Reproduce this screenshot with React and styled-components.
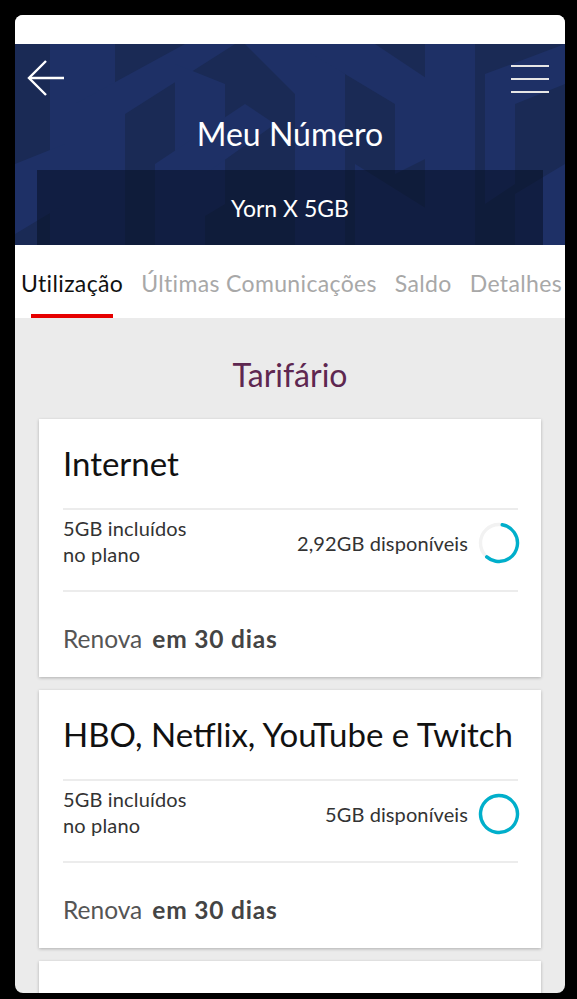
import React from 'react';
import styled, { createGlobalStyle } from 'styled-components';

const GlobalStyle = createGlobalStyle`
  html, body {
    margin: 0;
    padding: 0;
    background: #000;
  }
  * {
    box-sizing: border-box;
  }
`;

const Screen = styled.div`
  width: 550px;
  height: 978px;
  margin: 15px 0 0 15px;
  background: #ebebeb;
  border-radius: 8px;
  overflow: hidden;
  display: flex;
  flex-direction: column;
  font-family: 'Lato', 'Liberation Sans', sans-serif;
`;

const StatusBar = styled.div`
  height: 29px;
  flex-shrink: 0;
  background: #fff;
`;

const Header = styled.header`
  position: relative;
  height: 201px;
  flex-shrink: 0;
  background: #1b2a56;
  overflow: hidden;
  display: flex;
  flex-direction: column;
`;

const Pattern = styled.svg`
  position: absolute;
  inset: 0;
  width: 100%;
  height: 100%;
`;

const TopBar = styled.div`
  position: relative;
  display: flex;
  justify-content: space-between;
  align-items: flex-start;
  padding: 16px 16px 0 12px;
  height: 52px;
`;

const IconButton = styled.button`
  border: 0;
  background: none;
  padding: 0;
  display: flex;
  margin-top: ${(p) => p.$top || 0}px;
`;

const Title = styled.h1`
  position: relative;
  margin: 0;
  height: 74px;
  padding-top: 18px;
  text-align: center;
  font-weight: 400;
  font-size: 32px;
  color: #fff;
`;

const PlanBand = styled.div`
  position: relative;
  margin: 0 22px;
  height: 75px;
  background: rgba(8, 16, 36, 0.55);
  display: flex;
  align-items: center;
  justify-content: center;
  color: #fff;
  font-size: 23px;
`;

const Tabs = styled.nav`
  height: 73px;
  flex-shrink: 0;
  background: #fff;
  display: flex;
  gap: 18px;
  padding-left: 6px;
  white-space: nowrap;
  overflow: hidden;
`;

const Tab = styled.div`
  position: relative;
  display: flex;
  align-items: center;
  padding-top: 2px;
  font-size: 23px;
  letter-spacing: 0.35px;
  color: ${(p) => (p.$active ? '#111' : '#a8a8a8')};

  &::after {
    content: '';
    display: ${(p) => (p.$active ? 'block' : 'none')};
    position: absolute;
    left: 10px;
    right: 10px;
    bottom: 0;
    height: 4px;
    background: #e60000;
  }
`;

const Content = styled.main`
  flex: 1;
  display: flex;
  flex-direction: column;
  gap: 13px;
  padding: 0 24px;
`;

const SectionTitle = styled.h2`
  margin: 0;
  height: 88px;
  padding-top: 37px;
  text-align: center;
  font-weight: 400;
  font-size: 32px;
  color: #5e2750;
`;

const Card = styled.section`
  flex-shrink: 0;
  background: #fff;
  box-shadow: 0 1px 3px rgba(0, 0, 0, 0.25);
  padding: 0 23px 0 24px;
  min-height: 258px;
`;

const CardTitle = styled.h3`
  margin: 0;
  height: 91px;
  display: flex;
  align-items: center;
  padding-bottom: 2px;
  font-weight: 400;
  font-size: 33px;
  color: #111;
  border-bottom: 2px solid #ececec;
`;

const UsageRow = styled.div`
  height: 82px;
  display: flex;
  align-items: center;
  justify-content: space-between;
  border-bottom: 2px solid #ececec;
  padding-bottom: 19px;
`;

const Included = styled.div`
  font-size: 20px;
  line-height: 26px;
  letter-spacing: 0.15px;
  color: #333;
`;

const Available = styled.div`
  display: flex;
  align-items: center;
  gap: 10px;
  margin-right: -2px;
  margin-top: 4px;
  font-size: 20px;
  letter-spacing: 0.1px;
  color: #333;
`;

const Footer = styled.div`
  height: 85px;
  display: flex;
  align-items: center;
  padding-top: 7px;
  font-size: 24.5px;
  color: #555;

  strong {
    margin-left: 10px;
    font-weight: 700;
    letter-spacing: 0.8px;
    color: #444;
  }
`;

function BackArrow() {
  return (
    <svg width="38" height="36" viewBox="0 0 38 36" fill="none" stroke="#fff" strokeWidth="2.4">
      <path d="M37 18H2" />
      <path d="M19 1 2 18l17 17" />
    </svg>
  );
}

function Menu() {
  return (
    <svg width="38" height="28" viewBox="0 0 38 28" fill="none" stroke="#e6e6e6" strokeWidth="2">
      <path d="M0 1h38M0 14h38M0 27h38" />
    </svg>
  );
}

function UsageRing({ ratio }) {
  const r = 18.5;
  const c = 2 * Math.PI * r;
  return (
    <svg width="42" height="42" viewBox="0 0 42 42">
      <circle cx="21" cy="21" r={r} fill="none" stroke="#f2f2f2" strokeWidth="3.4" />
      <circle
        cx="21"
        cy="21"
        r={r}
        fill="none"
        stroke="#00afcb"
        strokeWidth="3.4"
        strokeLinecap="round"
        strokeDasharray={`${c * ratio} ${c}`}
        transform="rotate(-80 21 21)"
      />
    </svg>
  );
}

function HeaderPattern() {
  return (
    <Pattern viewBox="0 0 550 201" preserveAspectRatio="none">
      <g fill="#24397a" opacity="0.45">
        <polygon points="35,0 100,0 100,201 35,201" />
        <polygon points="60,60 170,0 220,0 110,70 110,201 60,201" />
        <polygon points="160,20 210,40 210,160 160,190" />
        <polygon points="230,0 290,0 330,30 330,201 280,201 280,50" />
        <polygon points="140,120 230,60 260,80 190,130 190,201 140,201" />
        <polygon points="280,0 360,0 420,40 420,110 380,130 380,60" />
        <polygon points="340,120 420,170 420,201 340,201" />
        <polygon points="410,0 460,0 460,201 410,201" />
        <polygon points="470,30 550,0 550,40 500,60 500,140 470,160" />
        <polygon points="500,150 550,120 550,201 500,201" />
        <polygon points="0,120 50,100 50,160 0,190" />
      </g>
    </Pattern>
  );
}

const cards = [
  { title: 'Internet', available: '2,92GB disponíveis', ratio: 0.584 },
  { title: 'HBO, Netflix, YouTube e Twitch', available: '5GB disponíveis', ratio: 1 },
];

export default function App() {
  return (
    <>
      <GlobalStyle />
      <Screen>
        <StatusBar />
        <Header>
          <HeaderPattern />
          <TopBar>
            <IconButton aria-label="Voltar">
              <BackArrow />
            </IconButton>
            <IconButton aria-label="Menu" $top={5}>
              <Menu />
            </IconButton>
          </TopBar>
          <Title>Meu Número</Title>
          <PlanBand>Yorn X 5GB</PlanBand>
        </Header>
        <Tabs>
          <Tab $active>Utilização</Tab>
          <Tab>Últimas Comunicações</Tab>
          <Tab>Saldo</Tab>
          <Tab>Detalhes</Tab>
        </Tabs>
        <Content>
          <SectionTitle>Tarifário</SectionTitle>
          {cards.map((card) => (
            <Card key={card.title}>
              <CardTitle>{card.title}</CardTitle>
              <UsageRow>
                <Included>
                  5GB incluídos
                  <br />
                  no plano
                </Included>
                <Available>
                  {card.available}
                  <UsageRing ratio={card.ratio} />
                </Available>
              </UsageRow>
              <Footer>
                Renova <strong>em 30 dias</strong>
              </Footer>
            </Card>
          ))}
          <Card />
        </Content>
      </Screen>
    </>
  );
}
